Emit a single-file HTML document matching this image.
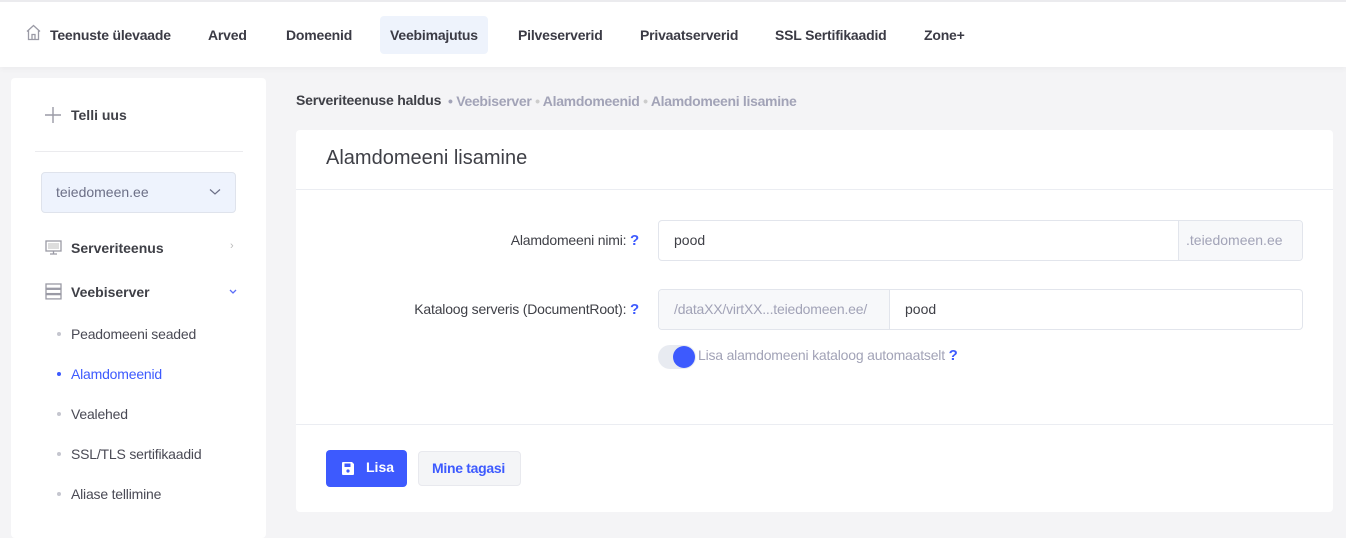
<!DOCTYPE html>
<html><head><meta charset="utf-8"><style>
*{box-sizing:border-box;margin:0;padding:0}
body{width:1346px;height:527px;overflow:hidden;background:#f4f4f6;font-family:"Liberation Sans",sans-serif;color:#3f4047;font-size:14px;position:relative}
.top{position:absolute;left:0;top:0;width:1346px;height:67px;background:#fff;border-top:2px solid #ebebee;box-shadow:0 2px 6px rgba(0,0,0,.04)}
.nav{position:absolute;top:14px;height:38px;line-height:38px;font-size:14px;color:#3b3b45;font-weight:600;letter-spacing:-.2px}
.nav.act{background:#eef3fc;border-radius:4px;padding:0 10px}
.side{position:absolute;left:11px;top:78px;width:255px;height:460px;background:#fff;border-radius:4px}
.main{position:absolute;left:296px;top:130px;width:1037px;height:382px;background:#fff;border-radius:4px}
.abs{position:absolute}
.q{color:#3d5afe;font-weight:bold;font-size:15px}
.inp{position:absolute;border:1px solid #e2e5ec;border-radius:4px;height:41px;background:#fff}
.sub{position:absolute;left:60px;font-size:14px;color:#4a4a55;letter-spacing:-.2px}
.dot{position:absolute;left:46px;width:4px;height:4px;border-radius:2px;background:#c5c6cf}
</style></head><body>
<div class="top">
 <svg class="abs" style="left:25px;top:22px" width="17" height="17" viewBox="0 0 17 17" fill="none" stroke="#9a9aa5" stroke-width="1.3"><path d="M2 7.5L8.5 1.5 15 7.5M3.5 6.5V15.5H13.5V6.5M7 15.5V10.5H10V15.5"/></svg>
 <div class="nav" style="left:50px">Teenuste ülevaade</div>
 <div class="nav" style="left:208px">Arved</div>
 <div class="nav" style="left:286px">Domeenid</div>
 <div class="nav act" style="left:380px">Veebimajutus</div>
 <div class="nav" style="left:518px">Pilveserverid</div>
 <div class="nav" style="left:640px">Privaatserverid</div>
 <div class="nav" style="left:775px">SSL Sertifikaadid</div>
 <div class="nav" style="left:924px">Zone+</div>
</div>
<div class="side">
 <svg class="abs" style="left:33px;top:28px" width="18" height="18" viewBox="0 0 18 18" stroke="#9a9aa5" stroke-width="1.4"><path d="M9 1V17M1 9H17"/></svg>
 <div class="abs" style="left:60px;top:29px;font-weight:600;font-size:14px">Telli uus</div>
 <div class="abs" style="left:24px;top:73px;width:208px;height:1px;background:#ebebee"></div>
 <div class="abs" style="left:30px;top:94px;width:195px;height:41px;background:#eef3fd;border:1px solid #dfe3ec;border-radius:4px"></div>
 <div class="abs" style="left:45px;top:106px;color:#6c6f86;font-size:14px">teiedomeen.ee</div>
 <svg class="abs" style="left:198px;top:110px" width="12" height="8" viewBox="0 0 12 8" fill="none" stroke="#6c6f86" stroke-width="1.2"><path d="M1 1.5L6 6 11 1.5"/></svg>
 <svg class="abs" style="left:34px;top:162px" width="17" height="15" viewBox="0 0 17 15" fill="none" stroke="#9a9aa5" stroke-width="1.3"><rect x="1" y="1" width="15" height="10"/><rect x="3" y="3" width="11" height="6" fill="#ddd" stroke="none"/><path d="M5 14H12M8.5 11V14"/></svg>
 <div class="abs" style="left:60px;top:162px;font-weight:600">Serveriteenus</div>
 <div class="abs" style="left:219px;top:162px;color:#bbb;font-size:11px">›</div>
 <svg class="abs" style="left:34px;top:205px" width="17" height="17" viewBox="0 0 17 17" fill="none" stroke="#9a9aa5" stroke-width="1.3"><rect x="1" y="1" width="15" height="4.3"/><rect x="1" y="6.3" width="15" height="4.3"/><rect x="1" y="11.6" width="15" height="4.3"/></svg>
 <div class="abs" style="left:60px;top:206px;font-weight:600">Veebiserver</div>
 <svg class="abs" style="left:218px;top:211px" width="8" height="5" viewBox="0 0 8 5" fill="none" stroke="#5c6ef8" stroke-width="1.3"><path d="M1 1L4 4 7 1"/></svg>
 <div class="dot" style="top:254px"></div><div class="sub" style="top:248px">Peadomeeni seaded</div>
 <div class="dot" style="top:294px;background:#3d5afe"></div><div class="sub" style="top:288px;color:#3d5afe">Alamdomeenid</div>
 <div class="dot" style="top:334px"></div><div class="sub" style="top:328px">Vealehed</div>
 <div class="dot" style="top:374px"></div><div class="sub" style="top:368px">SSL/TLS sertifikaadid</div>
 <div class="dot" style="top:414px"></div><div class="sub" style="top:408px">Aliase tellimine</div>
</div>
<div class="abs" style="left:296px;top:92px;font-weight:600;font-size:14px;letter-spacing:-.2px">Serveriteenuse haldus</div>
<div class="abs" style="left:448px;top:93px;font-size:14px;color:#a2a3b7;font-weight:600;letter-spacing:-.3px">• Veebiserver <span style="color:#ccc">•</span> Alamdomeenid <span style="color:#ccc">•</span> Alamdomeeni lisamine</div>
<div class="main">
 <div class="abs" style="left:30px;top:17px;font-size:20px;color:#3f4047">Alamdomeeni lisamine</div>
 <div class="abs" style="left:0;top:59px;width:1037px;height:1px;background:#ebedf2"></div>
 <div class="abs" style="left:0;top:102px;width:343px;text-align:right;letter-spacing:-.2px">Alamdomeeni nimi: <span class="q">?</span></div>
 <div class="inp" style="left:362px;top:90px;width:645px"></div>
 <div class="abs" style="left:882px;top:91px;width:124px;height:39px;background:#f7f8fa;border-left:1px solid #e2e5ec;border-radius:0 4px 4px 0"></div>
 <div class="abs" style="left:378px;top:102px">pood</div>
 <div class="abs" style="left:890px;top:102px;color:#a2a3b7">.teiedomeen.ee</div>
 <div class="abs" style="left:0;top:171px;width:343px;text-align:right;letter-spacing:-.2px">Kataloog serveris (DocumentRoot): <span class="q">?</span></div>
 <div class="inp" style="left:362px;top:159px;width:645px"></div>
 <div class="abs" style="left:363px;top:160px;width:231px;height:39px;background:#f7f8fa;border-right:1px solid #e2e5ec;border-radius:4px 0 0 4px"></div>
 <div class="abs" style="left:378px;top:171px;color:#a2a3b7;letter-spacing:-.2px">/dataXX/virtXX...teiedomeen.ee/</div>
 <div class="abs" style="left:609px;top:171px">pood</div>
 <div class="abs" style="left:362px;top:215px;width:38px;height:24px;border-radius:12px;background:#e8ebf1"></div>
 <div class="abs" style="left:377px;top:216px;width:22px;height:22px;border-radius:11px;background:#3d5afe"></div>
 <div class="abs" style="left:402px;top:217px;color:#a2a3b7;letter-spacing:-.2px">Lisa alamdomeeni kataloog automaatselt <span class="q">?</span></div>
 <div class="abs" style="left:0;top:294px;width:1037px;height:1px;background:#ebedf2"></div>
 <div class="abs" style="left:30px;top:320px;width:81px;height:37px;background:#3d5afe;border-radius:4px"></div>
 <svg class="abs" style="left:45px;top:331px" width="14" height="15" viewBox="0 0 14 15"><path d="M1 2Q1 1 2 1H11L13 3V13Q13 14 12 14H2Q1 14 1 13Z" fill="#fff"/><rect x="3.5" y="2.5" width="6" height="3.5" fill="#3d5afe"/><circle cx="7" cy="10" r="1.6" fill="#3d5afe"/></svg>
 <div class="abs" style="left:70px;top:329px;color:#fff;font-weight:bold">Lisa</div>
 <div class="abs" style="left:122px;top:321px;width:103px;height:35px;background:#f4f5f7;border:1px solid #e8e9ee;border-radius:4px"></div>
 <div class="abs" style="left:136px;top:330px;color:#3d5afe;font-weight:600;letter-spacing:-.3px">Mine tagasi</div>
</div>
</body></html>
